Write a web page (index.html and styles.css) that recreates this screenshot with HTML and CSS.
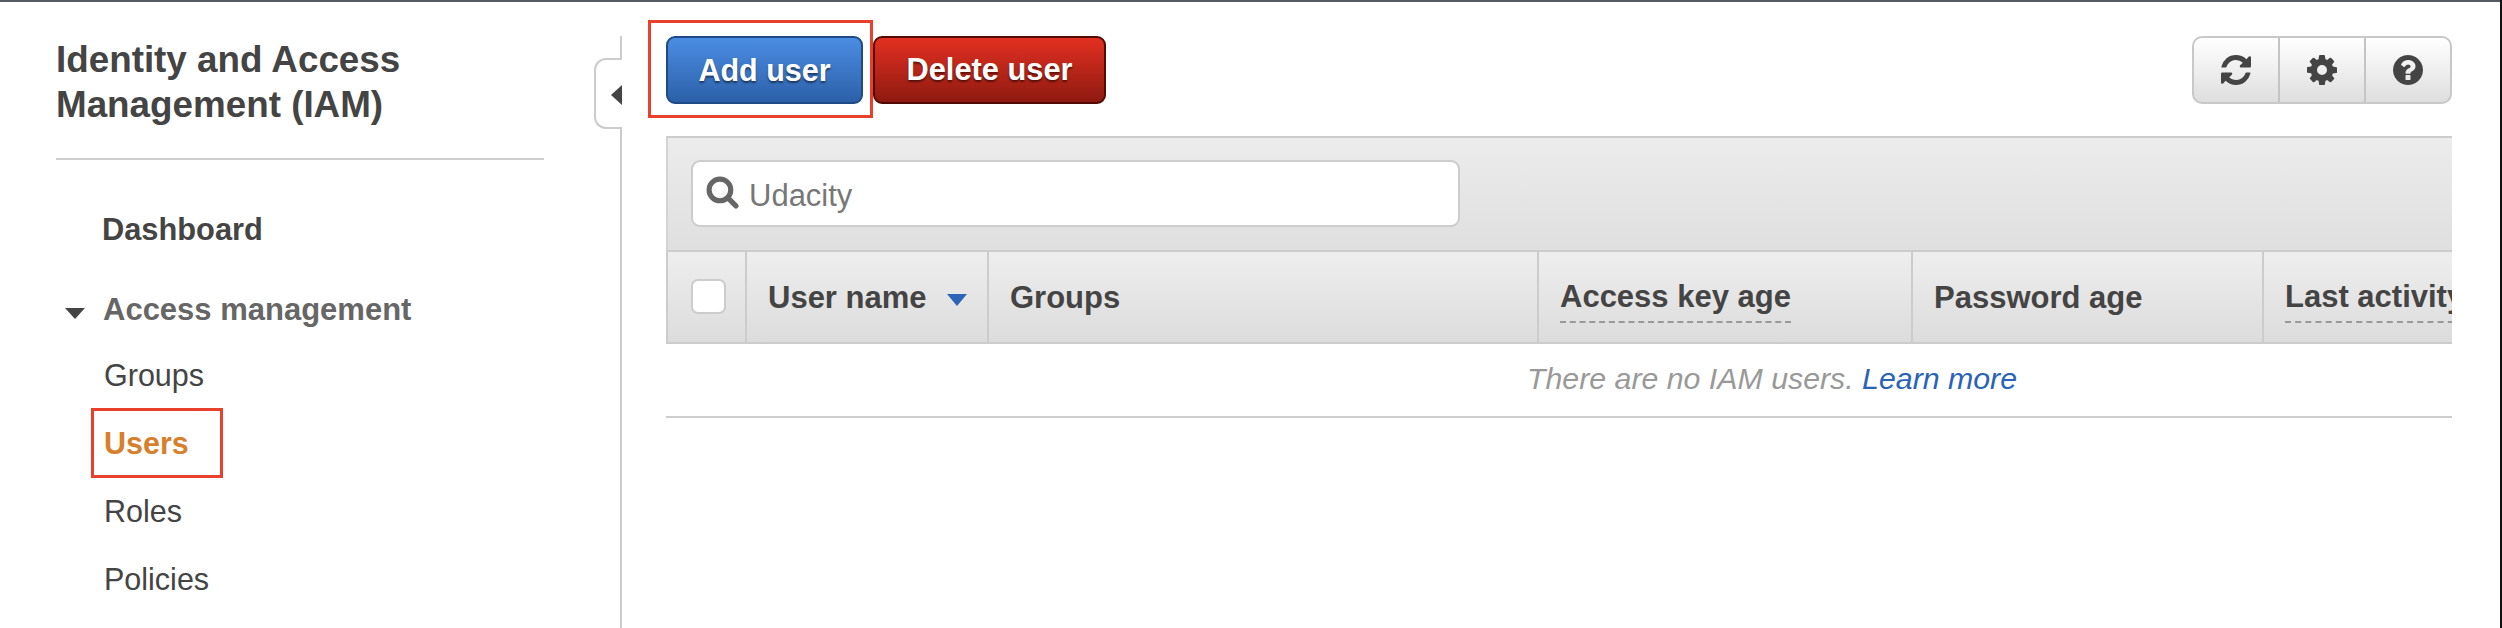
FILE: index.html
```html
<!DOCTYPE html>
<html lang="en">
<head>
<meta charset="utf-8">
<title>Users | IAM</title>
<link rel="stylesheet" href="styles.css">
</head>
<body>
<div class="frame">
<div class="app">
  <aside class="sidebar">
    <h1 class="side-title">Identity and Access Management (IAM)</h1>
    <nav class="side-nav">
      <a class="nav-top">Dashboard</a>
      <div class="nav-section"><span class="nav-caret"></span>Access management</div>
      <a class="nav-item">Groups</a>
      <a class="nav-item nav-active"><span class="nav-mark">Users</span></a>
      <a class="nav-item">Roles</a>
      <a class="nav-item">Policies</a>
    </nav>
  </aside>
  <div class="divider">
    <button class="collapse" aria-label="Collapse"><span class="collapse-arrow"></span></button>
  </div>
  <main class="content">
    <div class="toolbar">
      <div class="actions">
        <div class="mark"><button class="btn btn-blue">Add user</button></div>
        <button class="btn btn-red">Delete user</button>
      </div>
      <div class="tools">
        <button class="tool" aria-label="Refresh">
          <svg class="icon" viewBox="0 0 1536 1536"><path d="M1511 928q0 5-1 7-64 268-268 434.500T764 1536q-146 0-282.500-55T238 1324l-129 129q-19 19-45 19t-45-19-19-45V960q0-26 19-45t45-19h448q26 0 45 19t19 45-19 45l-137 137q71 66 161 102t187 36q134 0 250-65t186-179q11-17 53-117 8-23 30-23h192q13 0 22.500 9.500t9.500 22.500zm25-800v448q0 26-19 45t-45 19h-448q-26 0-45-19t-19-45 19-45l138-138Q969 256 768 256q-134 0-250 65T332 500q-11 17-53 117-8 23-30 23H50q-13 0-22.500-9.500T18 608v-7q65-268 270-434.500T768 0q146 0 284 55.500T1297 212l130-129q19-19 45-19t45 19 19 45z"/></svg>
        </button>
        <button class="tool" aria-label="Settings">
          <svg class="icon" viewBox="0 0 1536 1536"><path d="M1024 768q0-106-75-181t-181-75-181 75-75 181 75 181 181 75 181-75 75-181zm512-109v222q0 12-8 23t-20 13l-185 28q-19 54-39 91 35 50 107 138 10 12 10 25t-9 23q-27 37-99 108t-94 71q-12 0-26-9l-138-108q-44 23-91 38-16 136-29 186-7 28-36 28H657q-14 0-24.500-8.500T621 1506l-28-184q-49-16-90-37l-141 107q-10 9-25 9-14 0-25-11-126-114-165-168-7-10-7-23 0-12 8-23 15-21 51-66.500t54-70.500q-27-50-41-99L29 913q-13-2-21-12.500T0 877V655q0-12 8-23t19-13l186-28q14-46 39-92-40-57-107-138-10-12-10-24 0-10 9-23 26-36 98.500-107.500T337 136q13 0 26 10l138 107q44-23 91-38 16-136 29-186 7-28 36-28h222q14 0 24.500 8.500T915 30l28 184q49 16 90 37l142-107q9-9 24-9 13 0 25 10 129 119 165 170 7 8 7 22 0 12-8 23-15 21-51 66.500t-54 70.500q26 50 41 98l183 28q13 2 21 12.500t8 23.500z"/></svg>
        </button>
        <button class="tool" aria-label="Help">
          <svg class="icon" viewBox="0 0 1536 1536"><path d="M896 1248v-192q0-14-9-23t-23-9H672q-14 0-23 9t-9 23v192q0 14 9 23t23 9h192q14 0 23-9t9-23zm256-672q0-88-55.500-163T958 297t-170-41q-243 0-371 213-15 24 8 42l132 100q7 6 19 6 16 0 25-12 53-68 86-92 34-24 86-24 48 0 85.500 26t37.500 59q0 38-20 61t-68 45q-63 28-115.500 86.500T640 892v36q0 14 9 23t23 9h192q14 0 23-9t9-23q0-19 21.500-49.500T972 829q32-18 49-28.500t46-35 44.500-48 28-60.500 12.500-81zm384 192q0 209-103 385.500T1153.500 1433 768 1536t-385.500-103T103 1153.500 0 768t103-385.500T382.500 103 768 0t385.500 103T1433 382.500 1536 768z"/></svg>
        </button>
      </div>
    </div>
    <section class="panel">
      <div class="filter-bar">
        <label class="search">
          <svg class="search-icon" viewBox="0 0 32 32"><circle cx="13.500" cy="13.500" r="10.500"/><path d="M21 21l8 8"/></svg>
          <span class="search-text">Udacity</span>
        </label>
      </div>
      <div class="table-head">
        <div class="th th-check"><span class="checkbox"></span></div>
        <div class="th th-user"><span>User name</span><span class="sort"></span></div>
        <div class="th th-groups"><span>Groups</span></div>
        <div class="th th-key"><span class="dashed">Access key age</span></div>
        <div class="th th-pass"><span>Password age</span></div>
        <div class="th th-last"><span class="dashed">Last activity</span></div>
      </div>
      <div class="empty">There are no IAM users. <a class="link">Learn more</a></div>
    </section>
  </main>
</div>
</div>
</body>
</html>
```

FILE: styles.css
```css
*, *::before, *::after { box-sizing: border-box; }
html, body { margin: 0; height: 100%; overflow: hidden; background: #fff; }
body { font-family: "Liberation Sans", Arial, sans-serif; color: #444; }

.frame {
  width: 2502px;
  height: 628px;
  border-right: 2px solid #111;
}
.app {
  display: flex;
  height: 628px;
  border-top: 2px solid #545b64;
}

.sidebar { width: 620px; flex: none; padding: 0 76px 0 56px; }
.side-title {
  margin: 0;
  padding: 35px 0 31px;
  font-size: 36.800px;
  line-height: 45px;
  font-weight: 700;
  color: #444;
  border-bottom: 2px solid #ccc;
}
.side-nav { display: flex; flex-direction: column; }
.nav-top {
  margin: 52px 0 0 46px;
  font-size: 30.800px;
  line-height: 36px;
  font-weight: 700;
  color: #444;
}
.nav-section {
  display: flex;
  align-items: center;
  margin: 44px 0 0 9px;
  font-size: 31px;
  line-height: 36px;
  font-weight: 700;
  color: #666;
}
.nav-caret {
  width: 0;
  height: 0;
  margin: 6px 18px 0 0;
  border-left: 10px solid transparent;
  border-right: 10px solid transparent;
  border-top: 11px solid #444;
}
.nav-item {
  display: block;
  margin: 32px 0 0 48px;
  font-size: 30.500px;
  line-height: 36px;
  color: #444;
}
.nav-section + .nav-item { margin-top: 29px; }
.nav-active { font-weight: 700; color: #d67f2c; position: relative; }
.nav-mark::before {
  content: "";
  position: absolute;
  left: -13px;
  top: -17px;
  width: 132px;
  height: 70px;
  border: 3px solid #e8402a;
}

.divider {
  position: relative;
  width: 2px;
  flex: none;
  margin-top: 34px;
  background: #ccc;
}
.collapse {
  position: absolute;
  left: -26px;
  top: 22px;
  width: 28px;
  height: 71px;
  padding: 0;
  background: #fff;
  border: 2px solid #ccc;
  border-right: 0;
  border-radius: 12px 0 0 12px;
}
.collapse-arrow {
  position: absolute;
  right: 0;
  top: 25px;
  width: 0;
  height: 0;
  border-top: 10.500px solid transparent;
  border-bottom: 10.500px solid transparent;
  border-right: 11px solid #444;
}

.content { width: 1878px; flex: none; padding: 34px 48px 0 44px; }

.toolbar { display: flex; justify-content: space-between; height: 68px; }
.actions { display: flex; }
.mark { position: relative; margin-right: 10px; }
.mark::before {
  content: "";
  position: absolute;
  left: -18px;
  top: -16px;
  width: 225px;
  height: 98px;
  border: 3px solid #e8402a;
}
.btn {
  height: 68px;
  padding: 0;
  font-family: inherit;
  font-size: 30.500px;
  font-weight: 700;
  color: #fff;
  text-shadow: 0 2px 2px rgba(0, 0, 0, 0.5);
  border-radius: 9px;
  border: 2px solid;
}
.btn-blue {
  width: 197px;
  background: linear-gradient(#4b8de3, #2c60a8);
  border-color: #1e4a85;
}
.btn-red {
  width: 233px;
  font-size: 30.800px;
  background: linear-gradient(#e33022, #8e1a10);
  border-color: #520a05;
}
.tools {
  display: flex;
  width: 260px;
  height: 68px;
  border: 2px solid #c8c8c8;
  border-radius: 10px;
  background: linear-gradient(#fff, #dedede);
  overflow: hidden;
}
.tool {
  flex: 1;
  display: flex;
  align-items: center;
  justify-content: center;
  padding: 0;
  background: none;
  border: 0;
  border-left: 2px solid #c4c4c4;
}
.tool:first-child { border-left: 0; }
.icon { width: 30px; height: 30px; fill: #444; }

.panel { margin-top: 32px; }
.filter-bar {
  height: 116px;
  padding: 22px 0 0 23px;
  background: linear-gradient(#ececec, #dfdfdf);
  border-top: 2px solid #ccc;
  border-left: 2px solid #d4d4d4;
  border-bottom: 2px solid #ccc;
}
.search {
  display: flex;
  align-items: center;
  width: 769px;
  height: 67px;
  padding: 0 0 0 13px;
  background: #fff;
  border: 2px solid #ccc;
  border-radius: 9px;
}
.search-icon {
  width: 33px;
  height: 33px;
  margin: -3px 10px 0 0;
  fill: none;
  stroke: #666;
  stroke-width: 5;
  stroke-linecap: round;
}
.search-text { font-size: 31px; color: #777; padding-top: 5px; }

.table-head {
  display: grid;
  grid-template-columns: 79px 242px 550px 374px 351px 1fr;
  height: 92px;
  overflow: hidden;
  background: linear-gradient(#eee, #dcdcdc);
  border-left: 2px solid #ccc;
  border-bottom: 2px solid #ccc;
}
.th {
  position: relative;
  display: flex;
  align-items: center;
  padding: 2px 0 0 21px;
  font-size: 31px;
  font-weight: 700;
  color: #444;
  border-right: 2px solid #ccc;
  white-space: nowrap;
}
.th-last { border-right: 0; }
.th-check { padding-left: 23px; }
.checkbox {
  width: 35px;
  height: 35px;
  margin-top: -4px;
  background: #fff;
  border: 2px solid #ccc;
  border-radius: 7px;
}
.sort {
  width: 0;
  height: 0;
  margin: 4px 0 0 20px;
  border-left: 10px solid transparent;
  border-right: 10px solid transparent;
  border-top: 12px solid #2a65b8;
}
.dashed {
  border-bottom: 2px dashed #999;
  padding-bottom: 6px;
  margin-top: 6px;
}

.empty {
  height: 74px;
  padding: 17px 0 0 426px;
  text-align: center;
  font-size: 30.300px;
  line-height: 36px;
  font-style: italic;
  color: #999;
  border-bottom: 2px solid #ccc;
}
.link { color: #2a62b5; }
```
